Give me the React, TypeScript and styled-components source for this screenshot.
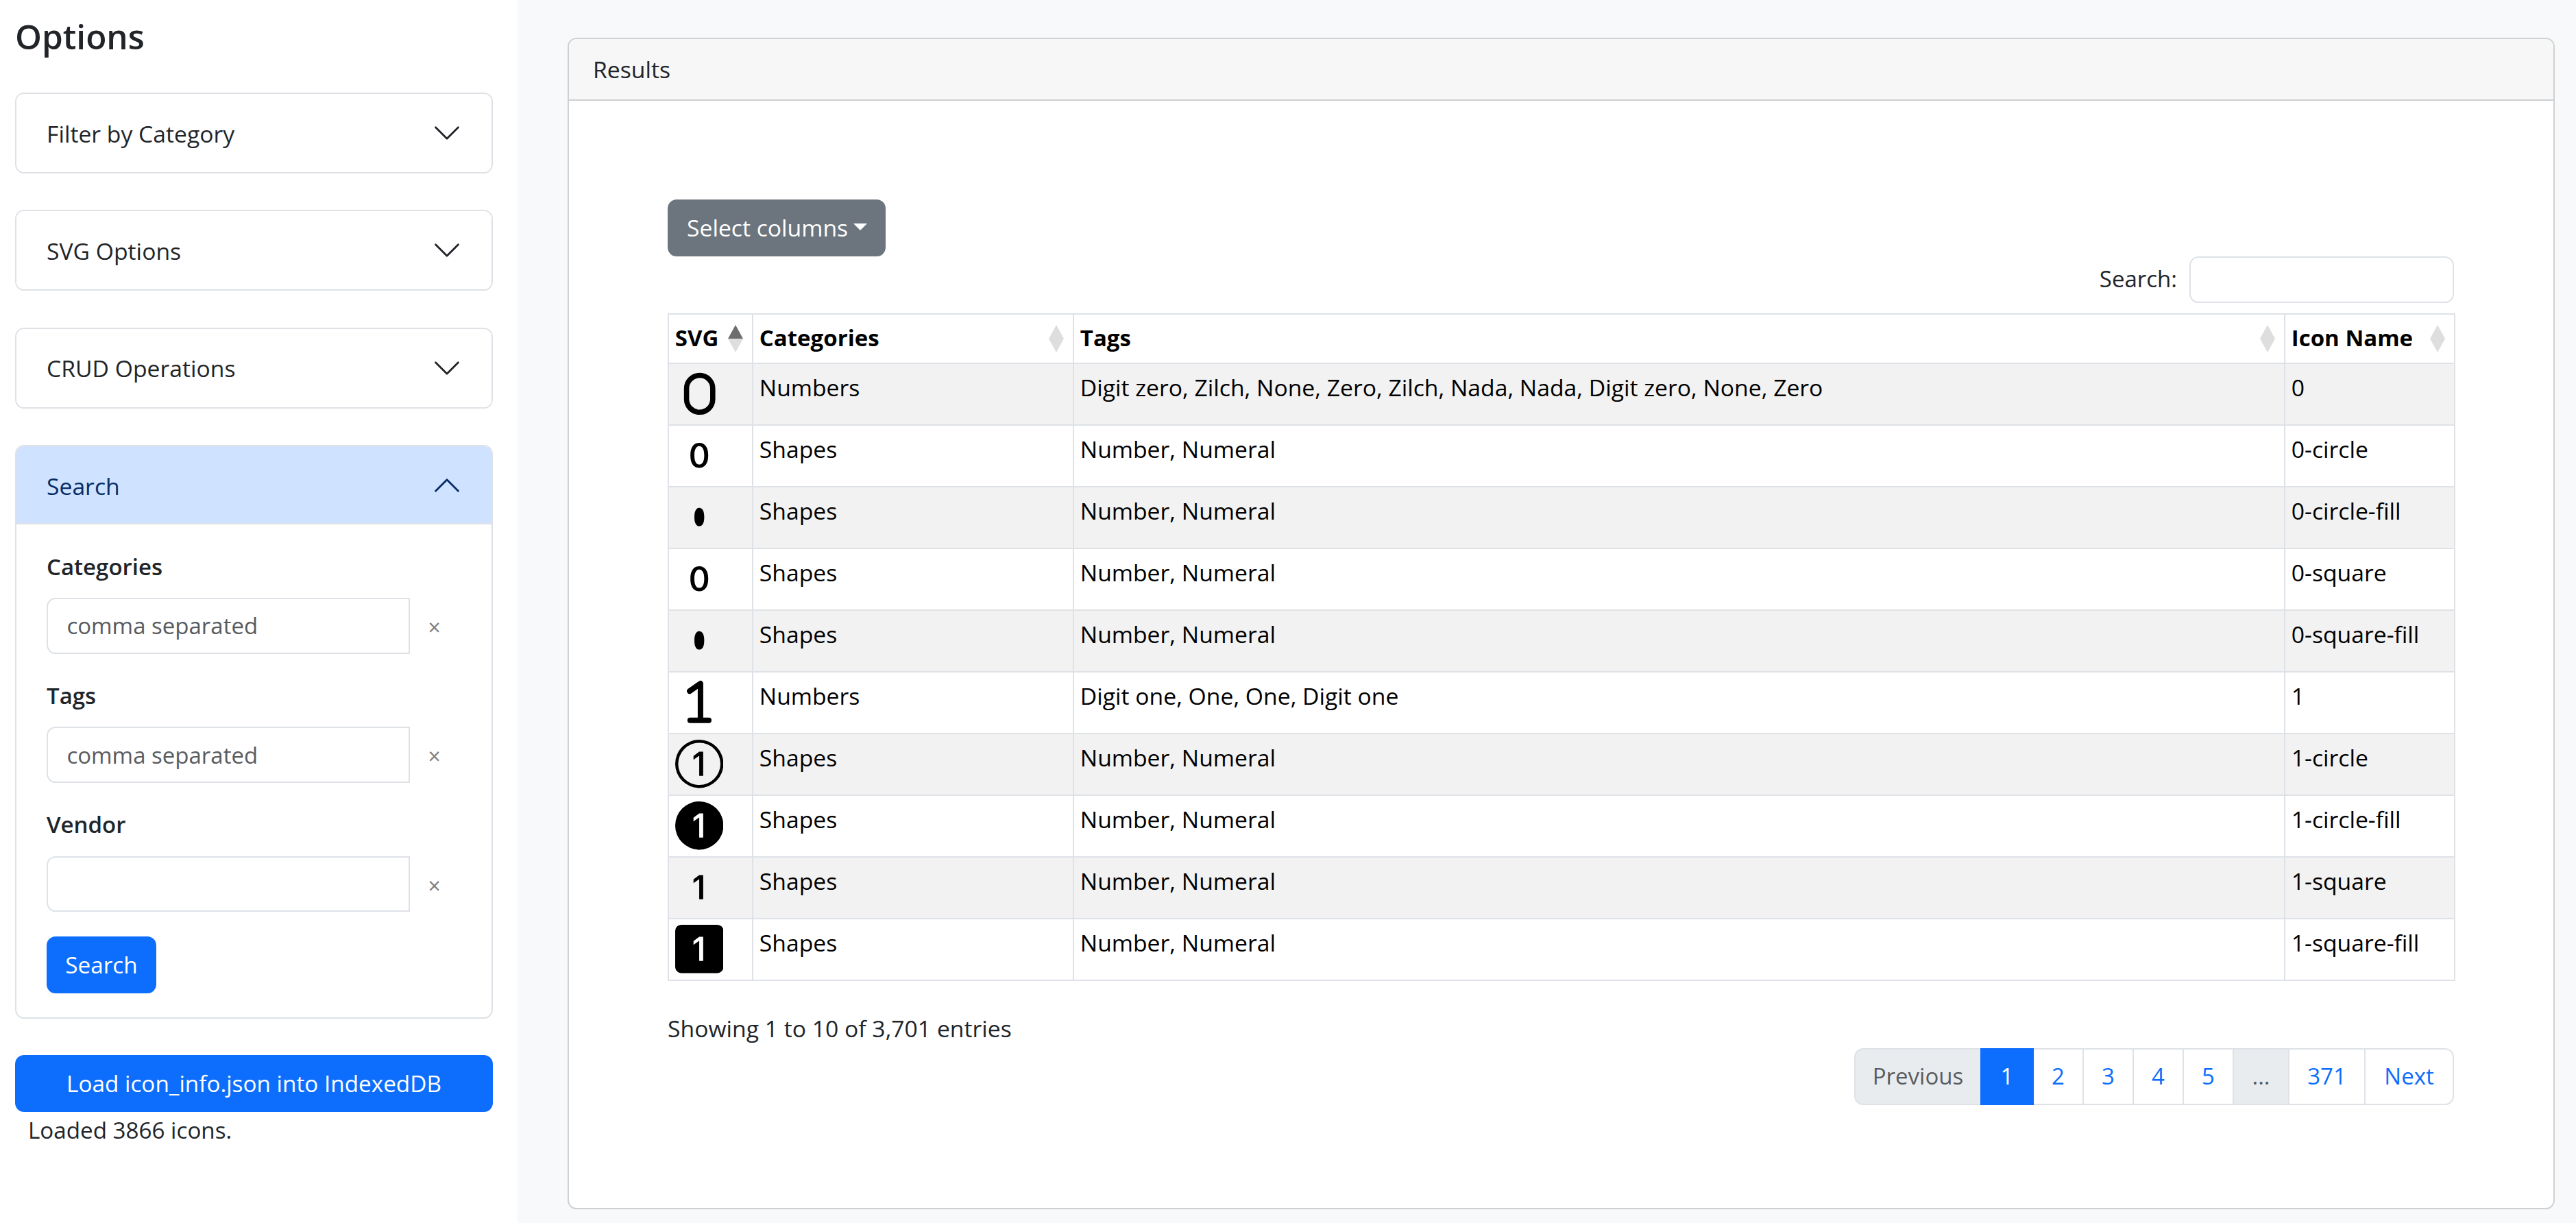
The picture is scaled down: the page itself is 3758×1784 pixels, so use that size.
import React from "react";
import styled, { createGlobalStyle } from "styled-components";

const GlobalStyle = createGlobalStyle`
  html, body {
    margin: 0;
    padding: 0;
    height: 100%;
    overflow: hidden;
  }
  body {
    font-family: "Open Sans", "Noto Sans", sans-serif;
    font-size: 33.7px;
    line-height: 52.8px;
    color: #212529;
    background: #fff;
  }
  * {
    box-sizing: border-box;
  }
`;

const Page = styled.div`
  display: flex;
  width: 3758px;
  height: 1784px;
  background: #f8f9fa;
`;

const Sidebar = styled.aside`
  width: 755px;
  flex-shrink: 0;
  height: 100%;
  background: #fff;
  padding: 22px 36px 0 22px;
`;

const SidebarTitle = styled.h4`
  margin: 0 0 49.6px;
  font-size: 49.5px;
  line-height: 63.4px;
  font-weight: 600;
`;

const AccordionStack = styled.div`
  display: flex;
  flex-direction: column;
  gap: 53.4px;
`;

const AccordionItem = styled.div`
  border: 2px solid #dee2e6;
  border-radius: 13.2px;
  background: #fff;
  overflow: hidden;
`;

const AccordionHeader = styled.div<{ $open?: boolean }>`
  display: flex;
  align-items: center;
  justify-content: space-between;
  height: 114px;
  padding: 2px 43px 0 44px;
  background: ${(p) => (p.$open ? "#cfe2ff" : "#fff")};
  color: ${(p) => (p.$open ? "#052c65" : "#212529")};
  box-shadow: ${(p) => (p.$open ? "inset 0 -2px 0 #dee2e6" : "none")};
`;

const Chevron = styled.svg<{ $open?: boolean }>`
  width: 44px;
  height: 44px;
  margin-top: -2px;
  transform: ${(p) => (p.$open ? "rotate(180deg)" : "none")};
`;

const AccordionBody = styled.div`
  padding: 35.5px 44px 34.7px;
`;

const Field = styled.div`
  margin-bottom: 35.5px;
`;

const FieldLabel = styled.label`
  display: block;
  margin-bottom: 18.5px;
  font-size: 33px;
  font-weight: 600;
`;

const InputRow = styled.div`
  display: flex;
  align-items: center;
`;

const TextInput = styled.input`
  width: 530px;
  height: 81.6px;
  padding: 0 27.4px;
  border: 2px solid #dee2e6;
  border-radius: 13.2px 0 0 13.2px;
  font: inherit;
  font-size: 33px;
  color: #212529;
  background: #fff;
  outline: none;

  &::placeholder {
    color: #595c5f;
    opacity: 1;
  }
`;

const ClearMark = styled.span`
  margin: 4px 0 0 26.5px;
  color: #808080;
  font-size: 32px;
  line-height: 1;
`;

const PrimaryButton = styled.button<{ $block?: boolean }>`
  display: block;
  width: ${(p) => (p.$block ? "697px" : "160px")};
  height: 83px;
  margin-top: ${(p) => (p.$block ? "0" : "1.1px")};
  padding: 0;
  border: none;
  border-radius: 13.2px;
  background: #0d6efd;
  color: #fff;
  font-family: inherit;
  font-size: 33.3px;
  line-height: inherit;
`;

const LoadedNote = styled.div`
  margin-top: 1px;
  padding-left: 19px;
  font-size: 33.2px;
`;

const Main = styled.main`
  flex: 1;
  min-width: 0;
  padding: 55px 31px 20px 73px;
`;

const Card = styled.section`
  height: 100%;
  border: 2px solid #ced0d1;
  border-radius: 13.2px;
  background: #fff;
  overflow: hidden;
`;

const CardHeader = styled.div`
  padding: 17.6px 35px;
  height: 90px;
  background: #f7f7f7;
  border-bottom: 2px solid #ced0d1;
`;

const CardBody = styled.div`
  padding: 144px 145px 0 144px;
`;

const DropdownButton = styled.button`
  display: flex;
  align-items: center;
  width: 318px;
  height: 83px;
  padding: 0 0 0 28px;
  border: none;
  border-radius: 13.2px;
  background: #6c757d;
  color: #fff;
  font: inherit;

  &::after {
    content: "";
    margin-left: 8px;
    margin-top: -3px;
    border-top: 10.5px solid #fff;
    border-left: 10px solid transparent;
    border-right: 10px solid transparent;
  }
`;

const TableSearch = styled.div`
  display: flex;
  justify-content: flex-end;
  align-items: center;
  gap: 18px;
  margin-bottom: 15px;
  font-size: 33px;
`;

const TableSearchInput = styled.input`
  width: 386px;
  height: 67.6px;
  border: 2px solid #dee2e6;
  border-radius: 13.2px;
  background: #fff;
  outline: none;
`;

const Table = styled.table`
  width: 2606px;
  table-layout: fixed;
  border-collapse: collapse;
  color: #000;
`;

const HeaderCell = styled.th`
  height: 72px;
  padding: 8.8px 13px 0 8.8px;
  border: 2px solid #dee2e6;
  text-align: left;
  vertical-align: top;
  font-size: 33px;
  font-weight: 700;
`;

const HeaderInner = styled.div`
  display: flex;
  justify-content: space-between;
  align-items: flex-start;
`;

const SortMark = styled.svg`
  width: 22px;
  height: 40px;
  flex-shrink: 0;
  margin-top: 7px;
`;

const Row = styled.tr<{ $striped: boolean }>`
  background: ${(p) => (p.$striped ? "#f2f2f2" : "#fff")};
`;

const Cell = styled.td`
  height: 90px;
  padding: 8.8px;
  border: 2px solid #dee2e6;
  vertical-align: top;
`;

const IconSvg = styled.svg`
  display: block;
  width: 70.4px;
  height: 70.4px;
`;

const TableInfo = styled.div`
  margin-top: 43px;
`;

const Pagination = styled.div`
  display: flex;
  justify-content: flex-end;
  margin-top: 3px;
  font-size: 33px;
`;

const PageItem = styled.div<{ $w: number; $state?: "active" | "disabled" }>`
  width: ${(p) => p.$w}px;
  height: 83px;
  display: flex;
  align-items: center;
  justify-content: center;
  margin-left: -2px;
  border: 2px solid ${(p) => (p.$state === "active" ? "#0d6efd" : "#dee2e6")};
  background: ${(p) =>
    p.$state === "active" ? "#0d6efd" : p.$state === "disabled" ? "#e9ecef" : "#fff"};
  color: ${(p) =>
    p.$state === "active" ? "#fff" : p.$state === "disabled" ? "#595c5f" : "#0d6efd"};
  position: relative;
  z-index: ${(p) => (p.$state === "active" ? 1 : 0)};

  &:first-child {
    border-radius: 13.2px 0 0 13.2px;
  }
  &:last-child {
    border-radius: 0 13.2px 13.2px 0;
  }
`;

const DOWN =
  "M1.646 4.646a.5.5 0 0 1 .708 0L8 10.293l5.646-5.647a.5.5 0 0 1 .708.708l-6 6a.5.5 0 0 1-.708 0l-6-6a.5.5 0 0 1 0-.708z";

const ZERO =
  "M7.988 12.158c-1.851 0-2.941-1.57-2.941-3.99V7.84c0-2.408 1.101-3.996 2.965-3.996 1.857 0 2.935 1.57 2.935 3.996v.328c0 2.408-1.101 3.99-2.959 3.99ZM8 4.951c-1.008 0-1.629 1.09-1.629 2.895v.31c0 1.81.627 2.895 1.629 2.895s1.623-1.09 1.623-2.895v-.31c0-1.8-.621-2.895-1.623-2.895Z";
const ZERO_FILL =
  "M8 4.951c-1.008 0-1.629 1.09-1.629 2.895v.31c0 1.81.627 2.895 1.629 2.895s1.623-1.09 1.623-2.895v-.31c0-1.8-.621-2.895-1.623-2.895Z";
const ONE = "M9.283 4.002V12H7.971V5.338h-.065L6.072 6.656V5.385l1.899-1.383h1.312Z";
const ONE_CIRCLE = `M1 8a7 7 0 1 0 14 0A7 7 0 0 0 1 8Zm15 0A8 8 0 1 1 0 8a8 8 0 0 1 16 0Z${ONE}`;
const ONE_CIRCLE_FILL =
  "M16 8A8 8 0 1 1 0 8a8 8 0 0 1 16 0ZM9.283 4.002H7.971L6.072 5.385v1.271l1.834-1.318h.065V12h1.312V4.002Z";
const ONE_SQUARE_FILL =
  "M2 0a2 2 0 0 0-2 2v12a2 2 0 0 0 2 2h12a2 2 0 0 0 2-2V2a2 2 0 0 0-2-2H2Zm7.283 4.002V12H7.971V5.338h-.065L6.072 6.656V5.385l1.899-1.383h1.312Z";

type IconKind = "zeroLarge" | "oneLarge" | string;

const RowIcon = ({ kind }: { kind: IconKind }) => {
  if (kind === "zeroLarge") {
    return (
      <IconSvg viewBox="0 0 70 70">
        <rect x="16.5" y="8.5" width="38" height="53.5" rx="19" fill="none" stroke="#000" strokeWidth="7.5" />
      </IconSvg>
    );
  }
  if (kind === "oneLarge") {
    return (
      <IconSvg viewBox="0 0 70 70">
        <path
          d="M21 19 L36.7 8 V61.4 M21.7 61.4 H48.7"
          fill="none"
          stroke="#000"
          strokeWidth="8"
          strokeLinecap="round"
          strokeLinejoin="round"
        />
      </IconSvg>
    );
  }
  return (
    <IconSvg viewBox="0 0 16 16">
      <path d={kind} fill="#000" fillRule="evenodd" />
    </IconSvg>
  );
};

const rows = [
  { icon: "zeroLarge", category: "Numbers", tags: "Digit zero, Zilch, None, Zero, Zilch, Nada, Nada, Digit zero, None, Zero", name: "0" },
  { icon: ZERO, category: "Shapes", tags: "Number, Numeral", name: "0-circle" },
  { icon: ZERO_FILL, category: "Shapes", tags: "Number, Numeral", name: "0-circle-fill" },
  { icon: ZERO, category: "Shapes", tags: "Number, Numeral", name: "0-square" },
  { icon: ZERO_FILL, category: "Shapes", tags: "Number, Numeral", name: "0-square-fill" },
  { icon: "oneLarge", category: "Numbers", tags: "Digit one, One, One, Digit one", name: "1" },
  { icon: ONE_CIRCLE, category: "Shapes", tags: "Number, Numeral", name: "1-circle" },
  { icon: ONE_CIRCLE_FILL, category: "Shapes", tags: "Number, Numeral", name: "1-circle-fill" },
  { icon: ONE, category: "Shapes", tags: "Number, Numeral", name: "1-square" },
  { icon: ONE_SQUARE_FILL, category: "Shapes", tags: "Number, Numeral", name: "1-square-fill" },
];

const pages: { label: string; w: number; state?: "active" | "disabled" }[] = [
  { label: "Previous", w: 186, state: "disabled" },
  { label: "1", w: 78, state: "active" },
  { label: "2", w: 75 },
  { label: "3", w: 75 },
  { label: "4", w: 75 },
  { label: "5", w: 75 },
  { label: "...", w: 83, state: "disabled" },
  { label: "371", w: 113 },
  { label: "Next", w: 131 },
];

const ChevronIcon = ({ open, color }: { open?: boolean; color: string }) => (
  <Chevron $open={open} viewBox="0 0 16 16">
    <path d={DOWN} fill={color} fillRule="evenodd" />
  </Chevron>
);

const Sort = ({ active }: { active?: boolean }) => (
  <SortMark viewBox="0 0 22 40">
    <polygon points="11,0 22,20 0,20" fill={active ? "#6e6e6e" : "#dedede"} />
    <polygon points="0,20 22,20 11,40" fill="#dedede" />
  </SortMark>
);

const Collapsed = ({ title }: { title: string }) => (
  <AccordionItem>
    <AccordionHeader>
      {title}
      <ChevronIcon color="#212529" />
    </AccordionHeader>
  </AccordionItem>
);

const SearchField = ({ label, placeholder }: { label: string; placeholder?: string }) => (
  <Field>
    <FieldLabel>{label}</FieldLabel>
    <InputRow>
      <TextInput placeholder={placeholder} readOnly />
      <ClearMark>×</ClearMark>
    </InputRow>
  </Field>
);

export default function App() {
  return (
    <Page>
      <GlobalStyle />
      <Sidebar>
        <SidebarTitle>Options</SidebarTitle>
        <AccordionStack>
          <Collapsed title="Filter by Category" />
          <Collapsed title="SVG Options" />
          <Collapsed title="CRUD Operations" />
          <AccordionItem>
            <AccordionHeader $open>
              Search
              <ChevronIcon open color="#052c65" />
            </AccordionHeader>
            <AccordionBody>
              <SearchField label="Categories" placeholder="comma separated" />
              <SearchField label="Tags" placeholder="comma separated" />
              <SearchField label="Vendor" />
              <PrimaryButton>Search</PrimaryButton>
            </AccordionBody>
          </AccordionItem>
          <div>
            <PrimaryButton $block>Load icon_info.json into IndexedDB</PrimaryButton>
            <LoadedNote>Loaded 3866 icons.</LoadedNote>
          </div>
        </AccordionStack>
      </Sidebar>
      <Main>
        <Card>
          <CardHeader>Results</CardHeader>
          <CardBody>
            <DropdownButton>Select columns</DropdownButton>
            <TableSearch>
              Search:
              <TableSearchInput readOnly />
            </TableSearch>
            <Table>
              <colgroup>
                <col style={{ width: 123 }} />
                <col style={{ width: 468 }} />
                <col style={{ width: 1767 }} />
                <col style={{ width: 248 }} />
              </colgroup>
              <thead>
                <tr>
                  <HeaderCell>
                    <HeaderInner>
                      SVG
                      <Sort active />
                    </HeaderInner>
                  </HeaderCell>
                  <HeaderCell>
                    <HeaderInner>
                      Categories
                      <Sort />
                    </HeaderInner>
                  </HeaderCell>
                  <HeaderCell>
                    <HeaderInner>
                      Tags
                      <Sort />
                    </HeaderInner>
                  </HeaderCell>
                  <HeaderCell>
                    <HeaderInner>
                      Icon Name
                      <Sort />
                    </HeaderInner>
                  </HeaderCell>
                </tr>
              </thead>
              <tbody>
                {rows.map((row, i) => (
                  <Row key={row.name} $striped={i % 2 === 0}>
                    <Cell>
                      <RowIcon kind={row.icon} />
                    </Cell>
                    <Cell>{row.category}</Cell>
                    <Cell>{row.tags}</Cell>
                    <Cell>{row.name}</Cell>
                  </Row>
                ))}
              </tbody>
            </Table>
            <TableInfo>Showing 1 to 10 of 3,701 entries</TableInfo>
            <Pagination>
              {pages.map((page) => (
                <PageItem key={page.label} $w={page.w} $state={page.state}>
                  {page.label}
                </PageItem>
              ))}
            </Pagination>
          </CardBody>
        </Card>
      </Main>
    </Page>
  );
}
